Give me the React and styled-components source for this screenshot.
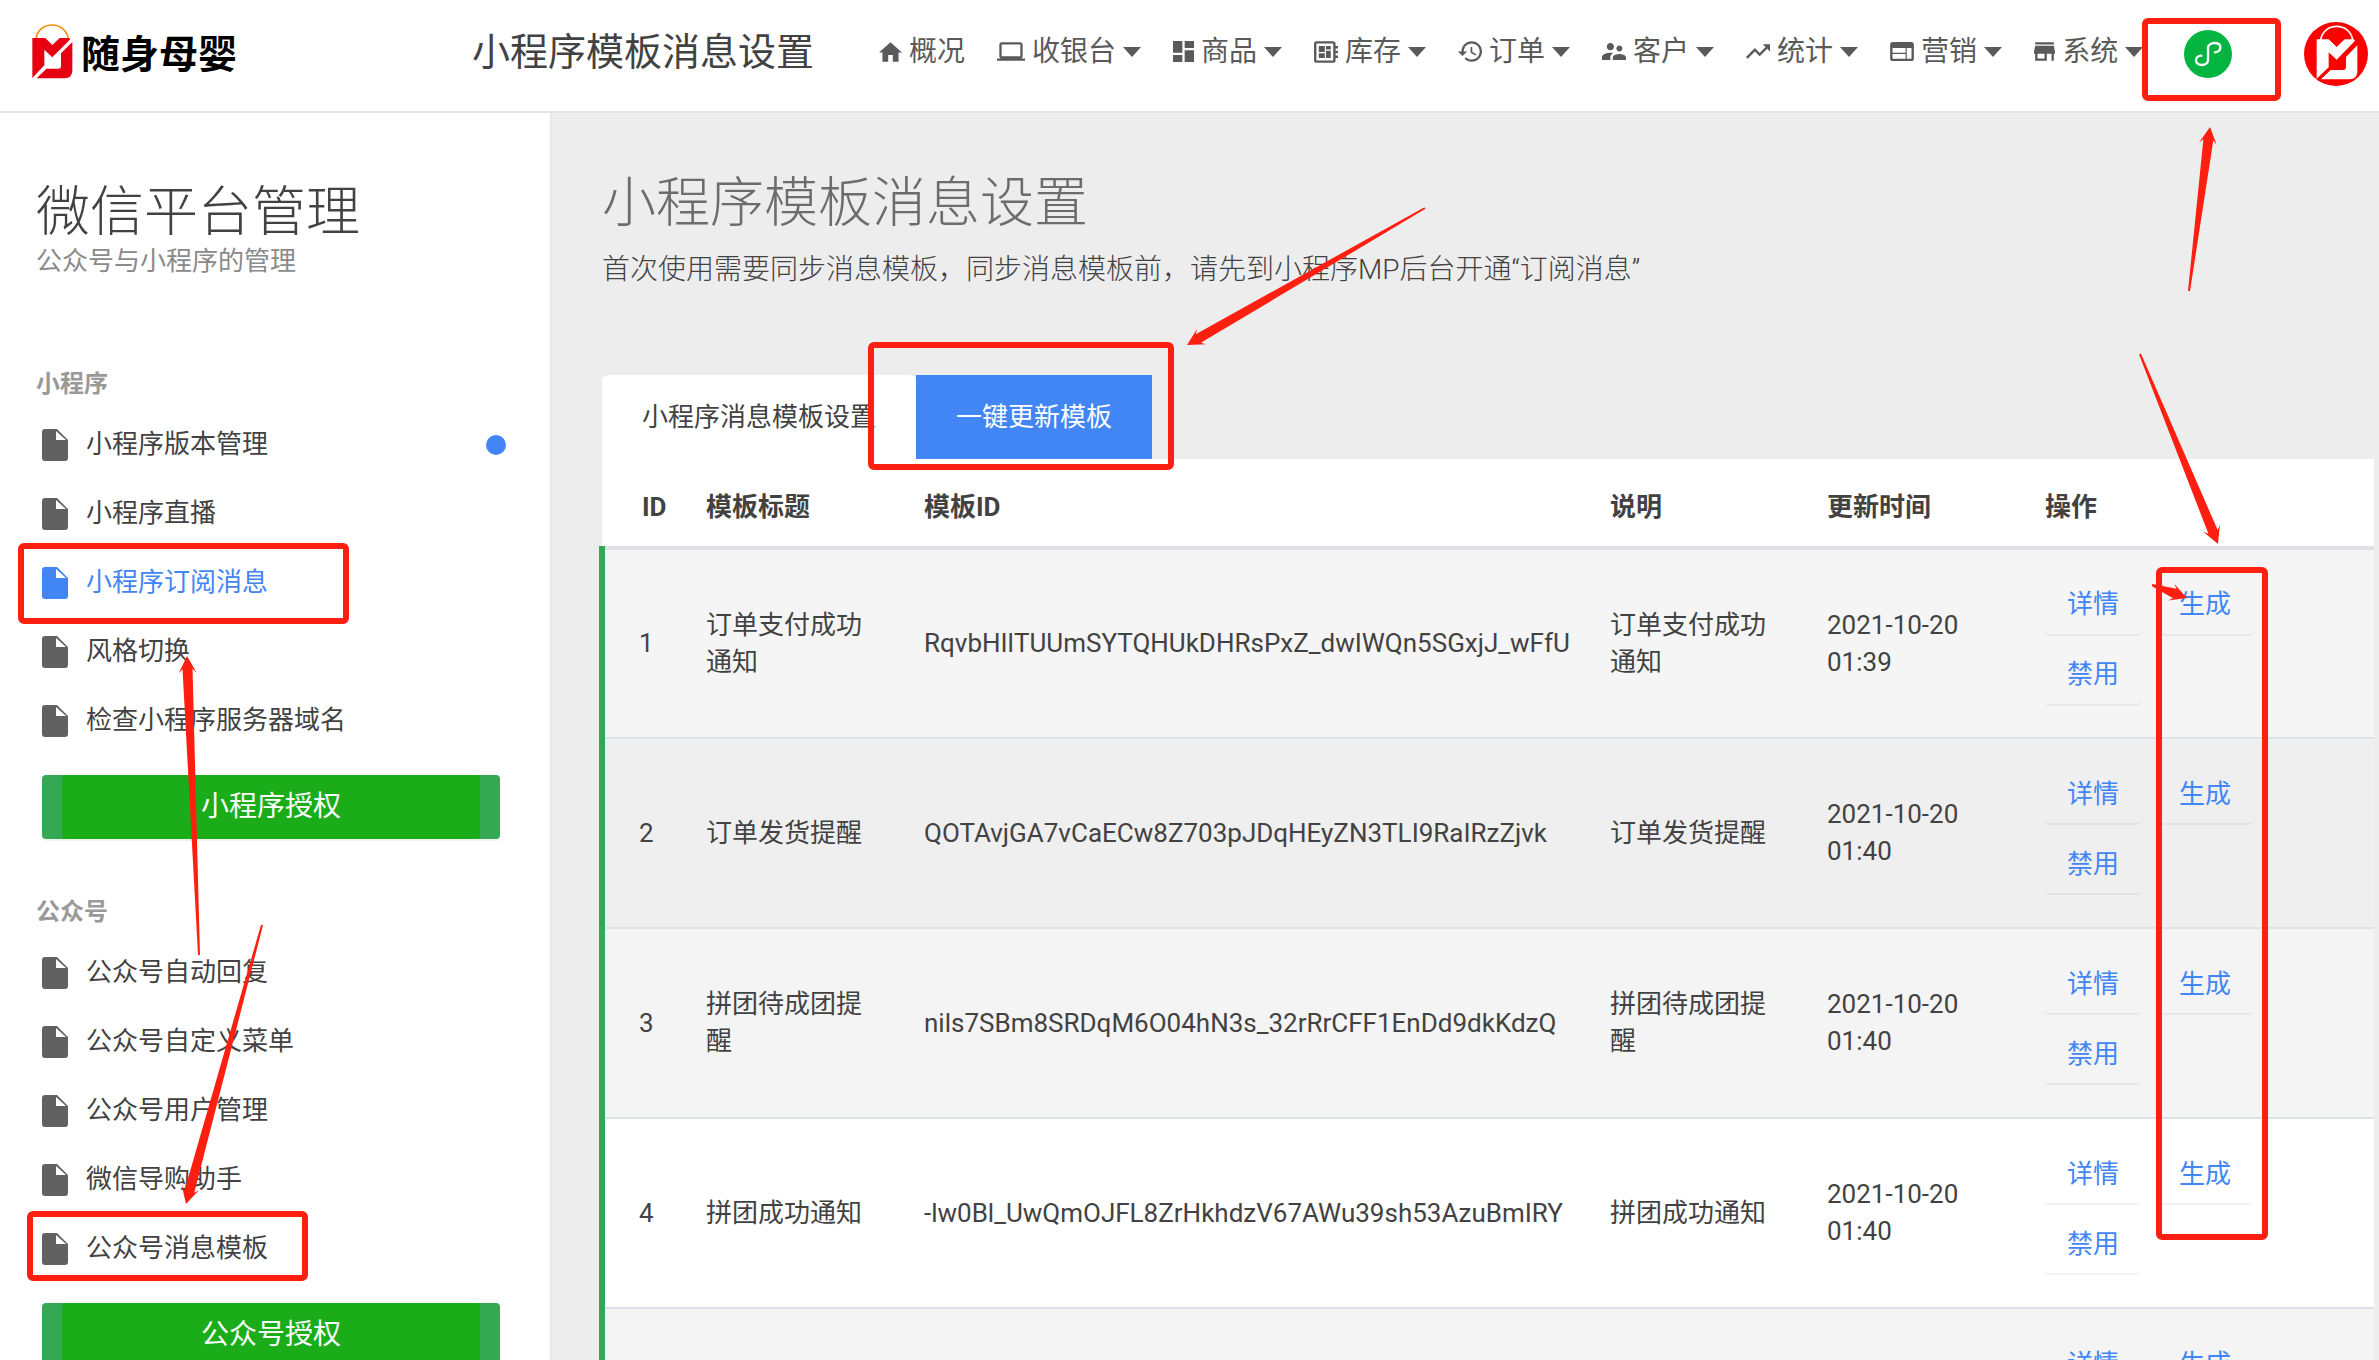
import React from "react";
import styled, { createGlobalStyle } from "styled-components";

const GlobalStyle = createGlobalStyle`
  * { box-sizing: border-box; }
  body {
    margin: 0;
    background: #ededed;
    color: #424242;
    font-family: Roboto, "Noto Sans CJK SC", sans-serif;
    font-size: 26px;
    line-height: 37px;
  }
  a { color: inherit; text-decoration: none; }
  button { font: inherit; border: 0; cursor: pointer; }
  h1, h2, h3, p, ul { margin: 0; padding: 0; }
  ul { list-style: none; }
`;

const Shell = styled.div`
  position: relative;
  height: 100vh;
  display: flex;
  flex-direction: column;
  overflow: hidden;
`;

const Header = styled.header`
  flex: none;
  display: flex;
  align-items: center;
  height: 113px;
  padding: 0 11px 4px 32px;
  background: #fff;
  border-bottom: 2px solid #e5e5e5;
`;

const Logo = styled.a`
  flex: none;
  display: flex;
  align-items: center;
  gap: 8px;
  width: 440px;
  padding-bottom: 4px;
`;

const LogoText = styled.span`
  padding-top: 6px;
  color: #000;
  font-size: 39px;
  line-height: 48px;
  font-weight: 700;
`;

const HeaderTitle = styled.h1`
  flex: none;
  width: 407px;
  padding-bottom: 4px;
  font-size: 38px;
  line-height: 54px;
  font-weight: 400;
  white-space: nowrap;
`;

const Nav = styled.nav`
  flex: none;
  display: flex;
  align-items: center;
  gap: 32px;
  padding-bottom: 4px;
  color: #5a5a5a;
  font-size: 28px;
  line-height: 40px;
`;

const NavLink = styled.a`
  display: flex;
  align-items: center;
  gap: 7px;
  white-space: nowrap;
`;

const Caret = styled.i`
  width: 0;
  height: 0;
  border: 9px solid transparent;
  border-top: 10px solid #5a5a5a;
  border-bottom: 0;
`;

const Actions = styled.div`
  display: flex;
  align-items: center;
  gap: 72px;
  margin-left: auto;
`;

const RoundButton = styled.button`
  display: block;
  width: ${(p) => p.$size}px;
  height: ${(p) => p.$size}px;
  padding: 0;
  border-radius: 50%;
  background: ${(p) => p.$color};
  overflow: hidden;
  svg { display: block; }
`;

const Body = styled.div`
  flex: 1;
  min-height: 0;
  display: flex;
`;

const Sidebar = styled.aside`
  flex: none;
  width: 552px;
  padding-top: 70px;
  background: #fff;
  border-right: 2px solid #e8e8e8;
  overflow: hidden;
`;

const SideTitle = styled.h2`
  padding-left: 36px;
  font-size: 54px;
  line-height: 60px;
  font-weight: 300;
`;

const SideSubtitle = styled.p`
  padding-left: 36px;
  margin-bottom: 86px;
  color: #8a8a8a;
  line-height: 37px;
`;

const Group = styled.section`
  margin-bottom: 55px;
`;

const GroupLabel = styled.h3`
  padding: 0 36px 8px;
  color: #999;
  font-size: 24px;
  line-height: 36px;
  font-weight: 700;
`;

const MenuLink = styled.a`
  display: flex;
  align-items: center;
  gap: 18px;
  height: 69px;
  padding: 0 44px 0 42px;
  color: ${(p) => (p.$active ? "#4285f4" : "#424242")};
  svg { fill: ${(p) => (p.$active ? "#4285f4" : "#616161")}; }
`;

const Dot = styled.span`
  width: 20px;
  height: 20px;
  margin-left: auto;
  border-radius: 50%;
  background: #4285f4;
`;

const AuthButton = styled.button`
  display: block;
  width: 458px;
  height: 64px;
  margin: 20px 0 0 42px;
  padding: 0 20px;
  border-radius: 4px;
  background: #34a853;
  box-shadow: 0 2px 0 rgba(0, 0, 0, 0.05);
  color: #fff;
  font-size: 28px;
  line-height: 64px;
`;

const AuthLabel = styled.span`
  display: block;
  border-radius: 4px;
  background: #1aad19;
`;

const Main = styled.main`
  flex: 1;
  min-width: 0;
  padding: 61px 5px 0 50px;
  overflow: hidden;
`;

const PageTitle = styled.h2`
  color: #6c6c6c;
  font-size: 54px;
  line-height: 60px;
  font-weight: 300;
`;

const PageHint = styled.p`
  margin: 16px 0 85px;
  font-size: 28px;
  line-height: 40px;
  font-weight: 300;
`;

const Tabs = styled.div`
  display: flex;
`;

const Tab = styled.button`
  height: 84px;
  padding: 0 40px;
  border-radius: ${(p) => (p.$primary ? "0" : "6px 6px 0 0")};
  background: ${(p) => (p.$primary ? "#4285f4" : "#fff")};
  color: ${(p) => (p.$primary ? "#fff" : "#424242")};
`;

/* The collapsed green border straddles the left edge of the panel. */
const Table = styled.table`
  width: calc(100% + 3px);
  margin-left: -3px;
  table-layout: fixed;
  border-collapse: collapse;
`;

const Col = styled.col`
  width: ${(p) => (p.$width ? `${p.$width}px` : "auto")};
`;

const HeadCell = styled.th`
  height: 89px;
  padding: 10px 20px 0;
  background: #fff;
  border-bottom: 4px solid #dee2e6;
  font-weight: 700;
  text-align: left;
  &:first-child { padding: 10px 0 0 40px; }
`;

const Row = styled.tr`
  background: ${(p) => p.$tone};
  border-bottom: 2px solid #dee2e6;
`;

const Cell = styled.td`
  height: 190px;
  padding: 0 20px;
  vertical-align: middle;
  &:first-child {
    padding-left: 34px;
    border-left: 6px solid #34a853;
  }
`;

const RowActions = styled.div`
  display: flex;
  flex-wrap: wrap;
  gap: 10px 16px;
  width: 210px;
  padding-bottom: 10px;
`;

const RowButton = styled.button`
  width: 96px;
  height: 60px;
  padding: 2px 0 0;
  border-radius: 4px;
  background: transparent;
  box-shadow: 0 2px 0 rgba(0, 0, 0, 0.05);
  color: #4285f4;
`;

const Overlay = styled.svg`
  position: absolute;
  inset: 0;
  width: 100%;
  height: 100%;
  pointer-events: none;
`;

const ICONS = {
  home: [23, 20, "2 3 20 17", "M10 20v-6h4v6h5v-8h3L12 3 2 12h3v8z"],
  laptop: [28, 19, "0 4 24 16", "M20 18c1.1 0 1.99-.9 1.99-2L22 6c0-1.1-.9-2-2-2H4c-1.1 0-2 .9-2 2v10c0 1.1.9 2 2 2H0v2h24v-2h-4zM4 6h16v10H4V6z"],
  board: [21, 21, "3 3 18 18", "M3 13h8V3H3v10zm0 8h8v-6H3v6zm10 0h8V11h-8v10zm0-18v6h8V3h-8z"],
  stock: [24, 22, "2 3 20 18", "M22 9V7h-2V5c0-1.1-.9-2-2-2H4c-1.1 0-2 .9-2 2v14c0 1.1.9 2 2 2h14c1.1 0 2-.9 2-2v-2h2v-2h-2v-2h2v-2h-2V9h2zm-4 10H4V5h14v14zM6 13h5v4H6zm6-6h4v3h-4zM6 7h5v5H6zm6 4h4v6h-4z"],
  history: [24, 21, "1 3 21 18", "M13 3c-4.97 0-9 4.03-9 9H1l3.89 3.89.07.14L9 12H6c0-3.87 3.13-7 7-7s7 3.13 7 7-3.13 7-7 7c-1.93 0-3.68-.79-4.94-2.06l-1.42 1.42C8.27 19.99 10.51 21 13 21c4.97 0 9-4.03 9-9s-4.03-9-9-9zm-1 5v5l4.28 2.54.72-1.21-3.5-2.08V8H12z"],
  people: [24, 17, "2 5 20 14", "M16.5 12c1.38 0 2.49-1.12 2.49-2.5S17.88 7 16.5 7C15.12 7 14 8.12 14 9.5s1.12 2.5 2.5 2.5zM9 11c1.66 0 2.99-1.34 2.99-3S10.66 5 9 5C7.34 5 6 6.34 6 8s1.34 3 3 3zm7.5 3c-1.83 0-5.5.92-5.5 2.75V19h11v-2.25c0-1.83-3.67-2.75-5.5-2.75zM9 13c-2.33 0-7 1.17-7 3.5V19h7v-2.25c0-.85.33-2.34 2.37-3.47C10.5 13.1 9.66 13 9 13z"],
  trend: [24, 15, "2 6 20 12", "M16 6l2.29 2.29-4.88 4.88-4-4L2 16.59 3.41 18l6-6 4 4 6.3-6.29L22 12V6z"],
  web: [24, 19, "2 4 20 16", "M20 4H4c-1.1 0-1.99.9-1.99 2L2 18c0 1.1.9 2 2 2h16c1.1 0 2-.9 2-2V6c0-1.1-.9-2-2-2zm-5 14H4v-4h11v4zm0-5H4V9h11v4zm5 5h-4V9h4v9z"],
  store: [21, 19, "3 4 18 16", "M20 4H4v2h16V4zm1 10v-2l-1-5H4l-1 5v2h1v6h10v-6h4v6h2v-6h1zm-9 4H6v-4h6v4z"],
};

function Icon({ name }) {
  const [width, height, viewBox, d] = ICONS[name];
  return (
    <svg width={width} height={height} viewBox={viewBox} fill="currentColor" aria-hidden="true">
      <path d={d} />
    </svg>
  );
}

function FileIcon() {
  return (
    <svg width="26" height="32" viewBox="0 0 26 32" aria-hidden="true">
      <path fillRule="evenodd" d="M3 0H15L26 11V29a3 3 0 0 1-3 3H3a3 3 0 0 1-3-3V3a3 3 0 0 1 3-3zM14 2V11H24z" />
    </svg>
  );
}

function BagMark() {
  return (
    <svg width="41" height="55" viewBox="35 40 123 165" aria-hidden="true">
      <path d="M47 84C50 58 72 43 95 43S140 58 144 84" fill="none" stroke="#f39010" strokeWidth="5" />
      <path fill="#e60012" d="M36 82H75L96 103L118 82H147L150 86L96 140L72 117V164L36 202Z" />
      <path fill="#e60012" d="M156 94V182Q154 203 134 203H49L78 174H114Q122 174 122 166V128Z" />
    </svg>
  );
}

function AvatarMark() {
  return (
    <svg width="64" height="64" viewBox="492 36 192 192" aria-hidden="true">
      <path d="M542 90C546 63 567 49 590 49S634 63 638 90" fill="none" stroke="#fff" strokeWidth="5" />
      <path fill="#fff" d="M530 88H566L590 111L614 88H642L645 92L590 149L566 127V172L530 206Z" />
      <path fill="#fff" d="M652 106V186Q650 208 630 208H543L572 180H608Q618 180 618 170V141Z" />
    </svg>
  );
}

function MiniProgramMark() {
  return (
    <svg width="48" height="48" viewBox="132 60 144 144" aria-hidden="true">
      <path
        d="M225 127C236 126 241 120 241 112C241 104 234 99 224 99C213 99 204 105 204 114V150C204 159 196 165 186 165C176 165 168 160 168 151C168 143 175 137 184 137"
        fill="none"
        stroke="#fff"
        strokeWidth="7"
        strokeLinecap="round"
      />
    </svg>
  );
}

const NAV = [
  ["概况", "home", false],
  ["收银台", "laptop", true],
  ["商品", "board", true],
  ["库存", "stock", true],
  ["订单", "history", true],
  ["客户", "people", true],
  ["统计", "trend", true],
  ["营销", "web", true],
  ["系统", "store", true],
];

const GROUPS = [
  {
    label: "小程序",
    action: "小程序授权",
    items: [
      { text: "小程序版本管理", dot: true },
      { text: "小程序直播" },
      { text: "小程序订阅消息", active: true },
      { text: "风格切换" },
      { text: "检查小程序服务器域名" },
    ],
  },
  {
    label: "公众号",
    action: "公众号授权",
    items: [
      { text: "公众号自动回复" },
      { text: "公众号自定义菜单" },
      { text: "公众号用户管理" },
      { text: "微信导购助手" },
      { text: "公众号消息模板" },
    ],
  },
];

const ROWS = [
  { id: "1", name: "订单支付成功通知", code: "RqvbHIlTUUmSYTQHUkDHRsPxZ_dwIWQn5SGxjJ_wFfU", time: "2021-10-20 01:39", tone: "#f5f5f5" },
  { id: "2", name: "订单发货提醒", code: "QOTAvjGA7vCaECw8Z703pJDqHEyZN3TLI9RaIRzZjvk", time: "2021-10-20 01:40", tone: "#efefef" },
  { id: "3", name: "拼团待成团提醒", code: "nils7SBm8SRDqM6O04hN3s_32rRrCFF1EnDd9dkKdzQ", time: "2021-10-20 01:40", tone: "#f4f4f4" },
  { id: "4", name: "拼团成功通知", code: "-lw0Bl_UwQmOJFL8ZrHkhdzV67AWu39sh53AzuBmIRY", time: "2021-10-20 01:40", tone: "#ffffff" },
  { id: "", name: "", code: "", time: "", tone: "#f4f4f4" },
];

const ROW_ACTIONS = ["详情", "生成", "禁用"];

const COLUMNS = [
  ["ID", 84],
  ["模板标题", 218],
  ["模板ID", 686],
  ["说明", 217],
  ["更新时间", 218],
  ["操作", 0],
];

const MARK_COLOR = "#ff1f11";

const BOXES = [
  [2145, 21, 133, 77],
  [21, 546, 325, 75],
  [30, 1214, 275, 64],
  [871, 345, 300, 122],
  [2159, 570, 106, 667],
];

const ARROWS = [
  { from: [2189, 291], to: [2210, 127] },
  { from: [1425, 208], to: [1187, 345] },
  { from: [2140, 354], to: [2218, 544] },
  { from: [2152, 585], to: [2187, 598] },
  { from: [199, 955], to: [187, 656] },
  { from: [262, 925], to: [186, 1204] },
];

/* A pen-style arrow: the shaft widens from its tail to the barbed head. */
function arrowPoints([x1, y1], [x2, y2]) {
  const length = Math.hypot(x2 - x1, y2 - y1);
  const ux = (x2 - x1) / length;
  const uy = (y2 - y1) / length;
  const at = (back, side) => `${x2 - ux * back - uy * side},${y2 - uy * back + ux * side}`;
  return [at(length, 1), at(13, 5), at(17, 9), at(0, 0), at(17, -9), at(13, -5), at(length, -1)].join(" ");
}

export default function App() {
  return (
    <Shell>
      <GlobalStyle />
      <Header>
        <Logo href="#">
          <BagMark />
          <LogoText>随身母婴</LogoText>
        </Logo>
        <HeaderTitle>小程序模板消息设置</HeaderTitle>
        <Nav>
          {NAV.map(([text, icon, hasMenu]) => (
            <NavLink href="#" key={text}>
              <Icon name={icon} />
              {text}
              {hasMenu && <Caret />}
            </NavLink>
          ))}
        </Nav>
        <Actions>
          <RoundButton $size={48} $color="#04b441" aria-label="小程序">
            <MiniProgramMark />
          </RoundButton>
          <RoundButton $size={64} $color="#ff0000" aria-label="随身母婴">
            <AvatarMark />
          </RoundButton>
        </Actions>
      </Header>
      <Body>
        <Sidebar>
          <SideTitle>微信平台管理</SideTitle>
          <SideSubtitle>公众号与小程序的管理</SideSubtitle>
          {GROUPS.map((group) => (
            <Group key={group.label}>
              <GroupLabel>{group.label}</GroupLabel>
              <ul>
                {group.items.map((item) => (
                  <li key={item.text}>
                    <MenuLink href="#" $active={item.active}>
                      <FileIcon />
                      {item.text}
                      {item.dot && <Dot />}
                    </MenuLink>
                  </li>
                ))}
              </ul>
              <AuthButton>
                <AuthLabel>{group.action}</AuthLabel>
              </AuthButton>
            </Group>
          ))}
        </Sidebar>
        <Main>
          <PageTitle>小程序模板消息设置</PageTitle>
          <PageHint>首次使用需要同步消息模板，同步消息模板前，请先到小程序MP后台开通“订阅消息”</PageHint>
          <Tabs>
            <Tab>小程序消息模板设置</Tab>
            <Tab $primary>一键更新模板</Tab>
          </Tabs>
          <Table>
            <colgroup>
              {COLUMNS.map(([label, width]) => (
                <Col key={label} $width={width} />
              ))}
            </colgroup>
            <thead>
              <tr>
                {COLUMNS.map(([label]) => (
                  <HeadCell key={label} scope="col">{label}</HeadCell>
                ))}
              </tr>
            </thead>
            <tbody>
              {ROWS.map((row, index) => (
                <Row key={index} $tone={row.tone}>
                  <Cell>{row.id}</Cell>
                  <Cell>{row.name}</Cell>
                  <Cell>{row.code}</Cell>
                  <Cell>{row.name}</Cell>
                  <Cell>{row.time}</Cell>
                  <Cell>
                    <RowActions>
                      {ROW_ACTIONS.map((action) => (
                        <RowButton key={action}>{action}</RowButton>
                      ))}
                    </RowActions>
                  </Cell>
                </Row>
              ))}
            </tbody>
          </Table>
        </Main>
      </Body>
      <Overlay aria-hidden="true">
        {BOXES.map(([x, y, width, height]) => (
          <rect key={`${x}-${y}`} x={x} y={y} width={width} height={height} rx="3" fill="none" stroke={MARK_COLOR} strokeWidth="6" />
        ))}
        {ARROWS.map(({ from, to }) => (
          <polygon key={to.join("-")} points={arrowPoints(from, to)} fill={MARK_COLOR} />
        ))}
      </Overlay>
    </Shell>
  );
}
